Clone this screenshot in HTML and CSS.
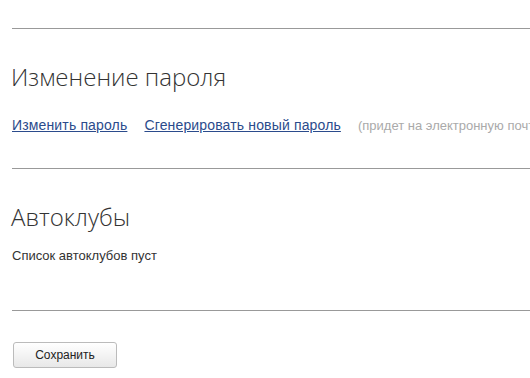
FILE: index.html
```html
<!DOCTYPE html>
<html lang="ru">
<head>
  <meta charset="UTF-8">
  <title>Настройки профиля</title>
  <link rel="stylesheet" href="styles.css">
</head>
<body>
  <div class="page">
    <hr class="sep first">

    <h2>Изменение пароля</h2>
    <div class="links">
      <a href="#">Изменить пароль</a>
      <a href="#">Сгенерировать новый пароль</a>
      <span class="hint">(придет на электронную почту)</span>
    </div>

    <hr class="sep">

    <h2>Автоклубы</h2>
    <p class="empty">Список автоклубов пуст</p>

    <hr class="sep">

    <button type="button">Сохранить</button>
  </div>
</body>
</html>
```

FILE: styles.css
```css
body {
  margin: 0;
  background-color: #fff;
  font-family: "Liberation Sans", Arial, sans-serif;
  color: #333;
}
.page {
  padding: 28px 0 0 12px;
  overflow: hidden;
}
.sep {
  margin: 0;
  border: none;
  border-top: 1px solid #999;
}
h2 {
  margin: 32px 0 0 -1px;
  font-family: "Open Sans", sans-serif;
  font-weight: 300;
  font-size: 24px;
  line-height: 32px;
  color: #333;
}
.links {
  margin: 23px 0 33px;
  white-space: nowrap;
  font-size: 14px;
  line-height: 18px;
  letter-spacing: 0.15px;
}
.links a {
  color: #2b4b8c;
  margin-right: 13px;
}
.hint {
  color: #aaa;
  font-size: 13px;
  letter-spacing: 0;
}
.empty {
  margin: 15px 0 46px;
  font-size: 13px;
  line-height: 16px;
}
button {
  margin: 31px 0 0 1px;
  width: 104px;
  height: 26px;
  border: 1px solid #bbb;
  border-radius: 3px;
  background: linear-gradient(#fff, #e8e8e8);
  font-family: "Liberation Sans", Arial, sans-serif;
  font-size: 12px;
  color: #222;
}
```
